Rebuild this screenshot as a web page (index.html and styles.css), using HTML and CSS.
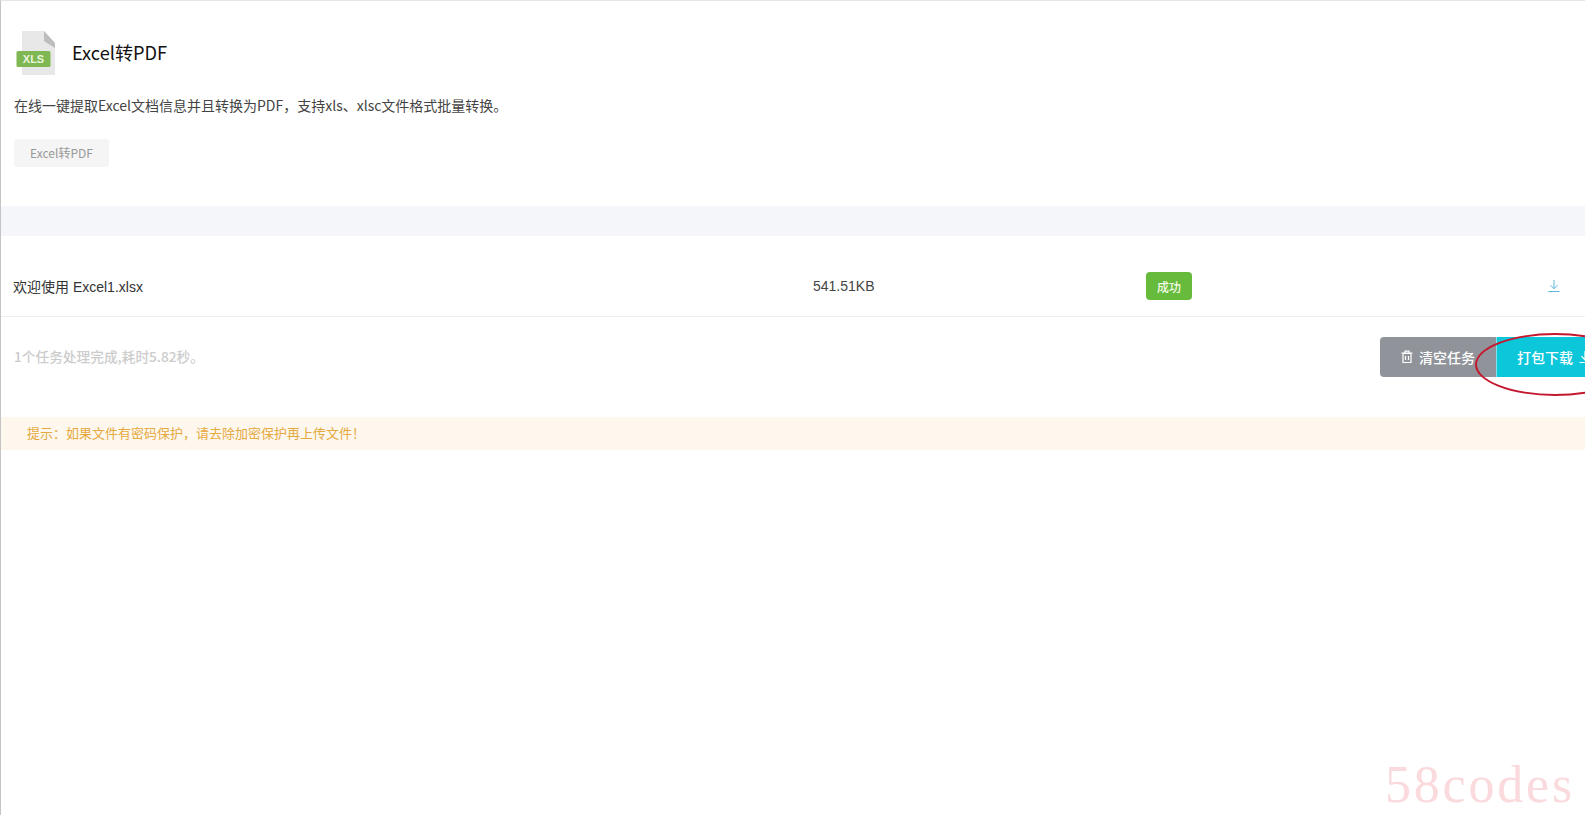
FILE: index.html
```html
<!DOCTYPE html>
<html lang="zh-CN">
<head>
<meta charset="utf-8">
<title>Excel转PDF</title>
<link rel="stylesheet" href="styles.css">
</head>
<body>
<main class="page">
  <section class="intro">
    <header class="intro-head">
      <svg class="file-icon" viewBox="0 0 40 46" width="40" height="46" aria-hidden="true">
        <path d="M6 1H28L39 13V45H6Z" fill="#e8e8e8"/>
        <path d="M28 1L39 13V18L28 11Z" fill="#bdbdbd"/>
        <rect x="0.5" y="21" width="34" height="16" rx="1.5" fill="#7fb853"/>
        <text x="17.5" y="33" class="file-icon-text" text-anchor="middle">XLS</text>
      </svg>
      <h1 class="title">Excel转PDF</h1>
    </header>
    <p class="desc">在线一键提取Excel文档信息并且转换为PDF，支持xls、xlsc文件格式批量转换。</p>
    <span class="tag"><span class="tag-label">Excel转PDF</span></span>
  </section>
  <div class="band"></div>
  <section class="file-row">
    <span class="file-name">欢迎使用 Excel1.xlsx</span>
    <span class="file-size">541.51KB</span>
    <span class="badge">成功</span>
    <svg class="row-download" viewBox="0 0 12 14" width="12" height="14" aria-hidden="true">
      <path d="M6 1V9.5M2.5 6.2L6 9.8L9.5 6.2M.5 12.5H11.5" fill="none" stroke="#5cb8dc" stroke-width="1"/>
    </svg>
  </section>
  <section class="summary">
    <span class="summary-text">1个任务处理完成,耗时5.82秒。</span>
    <div class="actions">
      <button class="btn btn-clear">
        <svg viewBox="0 0 12 14" width="12" height="14" aria-hidden="true">
          <path d="M2 3.5H10V12.5H2ZM.5 3H11.5M4 3V1.2H8V3M4.5 6V10M7.5 6V10" fill="none" stroke="#fff" stroke-width="1.2"/>
        </svg>
        清空任务
      </button>
      <button class="btn btn-pack">
        打包下载
        <svg viewBox="0 0 12 14" width="12" height="14" aria-hidden="true">
          <path d="M6 1V9.5M2.5 6.2L6 9.8L9.5 6.2M.5 12.5H11.5" fill="none" stroke="#fff" stroke-width="1.2"/>
        </svg>
      </button>
    </div>
  </section>
  <p class="notice"><span class="notice-text">提示：如果文件有密码保护，请去除加密保护再上传文件！</span></p>
</main>
<div class="red-ring"></div>
<div class="watermark">58codes</div>
</body>
</html>
```

FILE: styles.css
```css
* { box-sizing: border-box; }
html, body { margin: 0; height: 100%; overflow: hidden; background: #fff; }
body {
  position: relative;
  width: 1585px;
  height: 815px;
  border-top: 1px solid #e6e6e6;
  border-left: 1px solid #c4c4c4;
  font-family: "Noto Sans CJK SC", "Liberation Sans", sans-serif;
}
.intro { height: 205px; padding: 29px 0 0 13px; }
.intro-head { display: flex; align-items: center; height: 46px; }
.file-icon { margin-left: 2px; flex: none; }
.file-icon-text { font: bold 11px "Liberation Sans", sans-serif; fill: #e9f5dc; }
.title { margin: 0 0 2px 16px; font-size: 18.2px; font-weight: 400; color: #111; line-height: 44px; }
.desc { margin: 18px 0 0; font-size: 14px; line-height: 22px; color: #444; white-space: nowrap; }
.tag {
  display: inline-flex;
  align-items: center;
  justify-content: center;
  margin-top: 23px;
  width: 95px;
  height: 28px;
  border-radius: 3px;
  background: #f5f5f5;
  font-size: 12px;
  color: #999;
}
.tag-label { margin-bottom: 2px; }
.band { height: 30px; background: #f5f6fa; }
.file-row {
  display: flex;
  align-items: center;
  height: 81px;
  padding: 20px 0 0 12px;
  border-bottom: 1px solid #eeeeee;
  font-family: "Liberation Sans", "Noto Sans CJK SC", sans-serif;
  font-size: 14px;
  color: #333;
}
.file-name { width: 800px; margin-bottom: 1px; white-space: nowrap; }
.file-size { width: 333px; color: #444; }
.badge {
  display: inline-flex;
  align-items: center;
  justify-content: center;
  width: 46px;
  height: 28px;
  border-radius: 4px;
  background: #67bb3c;
  color: #f2fbe8;
  font-family: "Noto Sans CJK SC", sans-serif;
  font-size: 12px;
  font-weight: 500;
}
.row-download { margin-left: 356px; }
.summary {
  display: flex;
  align-items: center;
  justify-content: space-between;
  height: 80px;
  padding-left: 13px;
}
.summary-text { margin-top: -2px; font-size: 13.7px; font-weight: 500; color: #cccccc; }
.actions { display: flex; margin-right: -19px; }
.btn {
  display: flex;
  align-items: center;
  gap: 6px;
  height: 40px;
  border: 0;
  color: #fff;
  font-family: inherit;
  font-size: 14px;
  font-weight: 500;
  white-space: nowrap;
}
.btn-clear { width: 116px; padding: 0 0 0 21px; background: #909399; border-radius: 4px 0 0 4px; }
.btn-pack { width: 108px; padding: 0 0 0 20px; background: #0cc6da; border-left: 1px solid #7fe3ee; border-radius: 0 4px 4px 0; }
.notice {
  display: flex;
  align-items: center;
  margin: 20px 0 0;
  height: 33px;
  padding-left: 26px;
  background: #fdf7ee;
  color: #e6a93f;
  font-size: 13px;
}
.notice-text { margin-bottom: 2px; }
.red-ring {
  position: absolute;
  left: 1474px;
  top: 332px;
  width: 160px;
  height: 63px;
  border: 2px solid #c4182f;
  border-radius: 50%;
}
.watermark {
  position: absolute;
  left: 1384px;
  top: 754px;
  font-family: "Liberation Serif", serif;
  font-size: 52px;
  line-height: 60px;
  letter-spacing: 2.8px;
  color: #fadadd;
}
```
